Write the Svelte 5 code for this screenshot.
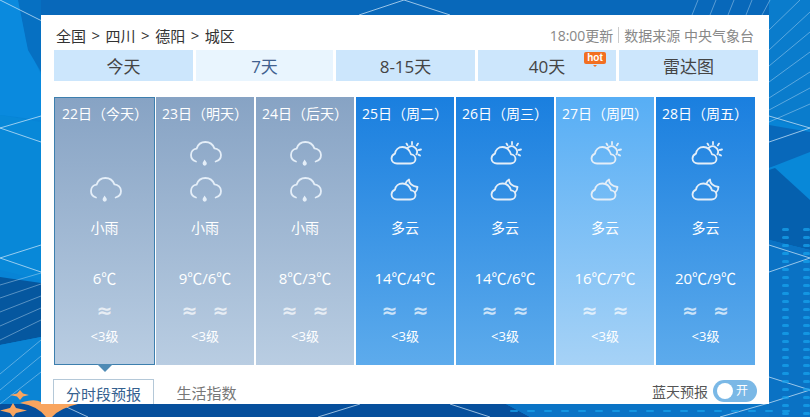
<script>
  const days = [
    { date: "22日（今天）", icons: ["rain"], weather: "小雨", temp: "6℃", winds: 1, level: "<3级", kind: "past", today: true },
    { date: "23日（明天）", icons: ["rain", "rain"], weather: "小雨", temp: "9℃/6℃", winds: 2, level: "<3级", kind: "past" },
    { date: "24日（后天）", icons: ["rain", "rain"], weather: "小雨", temp: "8℃/3℃", winds: 2, level: "<3级", kind: "past" },
    { date: "25日（周二）", icons: ["sun", "moon"], weather: "多云", temp: "14℃/4℃", winds: 2, level: "<3级", kind: "" },
    { date: "26日（周三）", icons: ["sun", "moon"], weather: "多云", temp: "14℃/6℃", winds: 2, level: "<3级", kind: "" },
    { date: "27日（周四）", icons: ["sun", "moon"], weather: "多云", temp: "16℃/7℃", winds: 2, level: "<3级", kind: "light" },
    { date: "28日（周五）", icons: ["sun", "moon"], weather: "多云", temp: "20℃/9℃", winds: 2, level: "<3级", kind: "" }
  ];
  const tabs = ["今天", "7天", "8-15天", "40天", "雷达图"];
  const rows = Array.from({ length: 24 }, (_, i) => 228 + i * 8);
  const dashes = Array.from({ length: 17 }, (_, i) => 510 + i * 17);
</script>

<div class="page">
  <svg class="bg" viewBox="0 0 810 417" width="810" height="417" aria-hidden="true">
    <rect width="810" height="417" fill="#0884d6" />
    <polygon points="0,0 810,0 810,15 0,15" fill="#0868ba" />
    <polygon points="0,0 20,0 26,40 41,75 41,120 0,115" fill="#0a8ade" />
    <polygon points="18,0 41,0 41,72 28,50" fill="#0670c2" />
    <polygon points="0,115 41,122 41,280 0,270" fill="#0888d8" />
    <polygon points="0,277 41,283 41,337 0,345" fill="#05579f" />
    <polygon points="0,345 41,337 41,417 0,417" fill="#0a84d4" />
    <polygon points="0,404 506,404 530,417 0,417" fill="#064f9c" />
    <polygon points="506,404 810,404 810,417 530,417" fill="#0a74c6" />
    <polygon points="769,0 810,0 810,130 769,118" fill="#0a7ccc" />
    <polygon points="769,125 810,132 810,155 769,168" fill="#0868ba" />
    <polygon points="769,168 810,152 810,200 775,168" fill="#0888d8" />
    <polygon points="769,170 775,168 810,200 810,250 769,240" fill="#0560ae" />
    <polygon points="769,240 810,250 810,417 769,417" fill="#0a72c4" />
    <g stroke="#d5ebfb" stroke-width="1" fill="none" opacity="0.7">
      <path d="M0 0 L44 22 M0 128 L41 116 M0 128 L41 142 M0 258 L41 245 M0 258 L41 272" />
      <path d="M810 128 L769 116 M810 128 L769 142 M810 258 L769 245 M810 258 L769 272 M810 390 L769 377 M810 390 L769 403" />
      <path d="M359 15 L404 0 L450 15" />
      <path d="M318 417 L360 404 M450 404 L490 417 M720 417 L769 403" />
      <path d="M60 404 L88 417" />
    </g>
    <g stroke="#d5ebfb" stroke-width="0.8" fill="none" opacity="0.5">
      <path d="M0 285 L41 273 M0 298 L41 284 M0 312 L41 296 M0 326 L41 308 M0 340 L41 320 M0 374 L41 340 M0 390 L41 356 M0 404 L41 372" />
      <path d="M769 30 L800 0 M769 50 L810 12 M769 66 L810 32 M769 82 L810 52 M769 98 L810 72 M769 110 L810 88 M769 122 L810 104" />
      <path d="M692 15 L698 0 M710 15 L716 0 M728 15 L734 0 M746 15 L752 0 M762 15 L770 0" />
    </g>
    <g fill="#17a2ec" opacity="0.75">
      {#each rows as y}
        <rect x="782" {y} width="7" height="3" rx="1.5" />
        <rect x="803" {y} width="7" height="3" rx="1.5" />
      {/each}
      {#each dashes as x}
        <rect {x} y="410" width="8" height="2" rx="1" />
      {/each}
    </g>
    <g fill="#f9a55f">
      <path d="M20 390 L23 393.5 L29 395 L23 396.5 L20 400 L17 396.5 L10 395 L17 393.5Z" />
      <path d="M13 403 L16 408 L27 410.5 L16 413 L13 417 L10 413 L0 410.5 L10 408Z" />
      <path d="M20 403 Q34 398 41 402 Q62 402 78 404 Q60 408 52 417 L46 417 Q38 406 20 403Z" />
    </g>
  </svg>

  <main class="panel">
    <header class="top">
      <nav class="crumbs">
        <span>全国</span><i>&gt;</i><span>四川</span><i>&gt;</i><span>德阳</span><i>&gt;</i><span>城区</span>
      </nav>
      <div class="meta">18:00更新<b></b>数据来源 中央气象台</div>
    </header>

    <div class="tabs">
      {#each tabs as tab, i}
        <div class="tab" class:active={i === 1}>
          {tab}
          {#if tab === "40天"}<em class="hot">hot</em>{/if}
        </div>
      {/each}
    </div>

    <div class="cards">
      {#each days as day}
        <div class="card {day.kind}" class:today={day.today}>
          <div class="date">{day.date}</div>
          <div class="icons" class:single={day.icons.length === 1}>
            {#each day.icons as icon}
              <svg class="ico" viewBox="0 0 32 26" width="32" height="26" fill="none" stroke="currentColor" stroke-width="1.8" stroke-linecap="round" stroke-linejoin="round">
                {#if icon === "rain"}
                  <path d="M6 20.5C2.8 19.5 1 17 1 14C1 10.6 3.4 8 6.6 7.6C8 3.4 11.4 1 15.4 1C19.6 1 23 3.6 24.4 7.4C28 7.6 31 10.4 31 14C31 17 29 19.6 25.6 20.5" />
                  <path d="M14.6 18.6C13.6 20.4 12.6 21.4 12.6 22.6A2.1 2.1 0 0 0 16.8 22.6C16.8 21.4 15.6 20.4 14.6 18.6Z" fill="currentColor" stroke="none" />
                {:else if icon === "sun"}
                  <path d="M7 22.5H20.5C23.5 22.5 25.5 20.5 25.5 18C25.5 15.5 23.5 13.5 21 13.3C19.5 8.8 16.5 6 12.5 6C8.5 6 5.5 8.8 5 12.6C2.8 13.6 1.5 15.4 1.5 17.6C1.5 20.4 4 22.5 7 22.5Z" />
                  <path d="M17.6 7A5.5 5.5 0 0 1 26.4 13.4" />
                  <path d="M22 1V3.2M16.5 2.6L17.5 4.2M28 2.6L26.8 4.4M31 8.5L28.8 9M30 14.5L28.4 13.6" />
                {:else}
                  <path d="M7 22.5H20.5C23.5 22.5 25.5 20.5 25.5 18C25.5 15.5 23.5 13.5 21 13.3C19.5 8.8 16.5 6.5 12.5 6.5C8.5 6.5 5.5 9 5 12.6C2.8 13.6 1.5 15.4 1.5 17.6C1.5 20.4 4 22.5 7 22.5Z" />
                  <path d="M15.5 6.5C16 5 17.2 3.5 19 2.5C19 6 22 9 27.5 10C27.5 12 26.6 14 25 15.5" />
                {/if}
              </svg>
            {/each}
          </div>
          <div class="weather">{day.weather}</div>
          <div class="temp">{day.temp}</div>
          <div class="wind">
            {#each Array(day.winds) as _}<span>≈</span>{/each}
          </div>
          <div class="level">{day.level}</div>
        </div>
      {/each}
    </div>

    <footer class="bottom">
      <div class="subtabs">
        <div class="subtab on">分时段预报</div>
        <div class="subtab">生活指数</div>
      </div>
      <div class="blue">
        蓝天预报
        <span class="switch"><span class="knob"></span>开</span>
      </div>
    </footer>
  </main>
</div>

<style>
  :global(body) {
    margin: 0;
  }
  .page {
    position: relative;
    width: 810px;
    height: 417px;
    overflow: hidden;
    box-sizing: border-box;
    padding: 15px 41px 13px;
    font-family: "Open Sans", "Noto Sans CJK SC", sans-serif;
  }
  .bg {
    position: absolute;
    left: 0;
    top: 0;
  }
  .panel {
    position: relative;
    height: 389px;
    overflow: hidden;
    background: #fff;
    padding: 0 13px;
    box-sizing: border-box;
  }
  .top {
    display: flex;
    justify-content: space-between;
    align-items: center;
    height: 35px;
    padding: 5px 2px 0;
    box-sizing: border-box;
  }
  .crumbs {
    display: flex;
    align-items: center;
    gap: 5.5px;
    font-size: 15px;
    color: #333;
  }
  .crumbs i {
    font-style: normal;
  }
  .meta {
    display: flex;
    align-items: center;
    font-size: 14px;
    color: #888;
  }
  .meta b {
    width: 1px;
    height: 16px;
    margin: 0 5px;
    background: #ccc;
  }
  .tabs {
    display: grid;
    grid-template-columns: 139px 137px 139px 138px 139px;
    gap: 3px;
    height: 31px;
  }
  .tab {
    position: relative;
    display: flex;
    align-items: center;
    justify-content: center;
    background: #cce6fc;
    color: #444;
    font-size: 17px;
  }
  .tab.active {
    background: #e9f5fe;
    color: #41618f;
  }
  .hot {
    position: absolute;
    right: 10px;
    top: 2px;
    width: 22px;
    height: 12px;
    border-radius: 2px;
    background: #f26f21;
    color: #fff;
    text-align: center;
    font: 700 10px/11px "Liberation Sans", sans-serif;
  }
  .hot::after {
    content: "";
    position: absolute;
    left: 9px;
    bottom: -3px;
    border: 2px solid transparent;
    border-top-color: #f26f21;
    border-bottom: 0;
  }
  .cards {
    display: grid;
    grid-template-columns: 100px 98px 98px 98px 98px 98px 99px;
    column-gap: 2px;
    height: 268px;
    margin-top: 16px;
  }
  .card {
    position: relative;
    display: flex;
    flex-direction: column;
    box-sizing: border-box;
    padding: 7px 0 0;
    color: #fff;
    text-align: center;
    background: linear-gradient(#1a7fdf, #5dabec);
  }
  .card.past {
    background: linear-gradient(#87a3c4, #b9cde2);
  }
  .card.light {
    background: linear-gradient(#57aef5, #a6d2f6);
  }
  .card.today {
    border: 1px solid #3d7fae;
    margin-right: -1px;
    padding-top: 6px;
  }
  .card.today::after {
    content: "";
    position: absolute;
    left: 50%;
    bottom: -8px;
    margin-left: -8px;
    border: 8px solid transparent;
    border-top-color: #4f8bb5;
    border-bottom: 0;
  }
  .date {
    font-size: 14px;
    line-height: 20px;
    text-align: left;
    padding-left: 6px;
    white-space: nowrap;
  }
  .card.today .date {
    padding-left: 7px;
  }
  .icons {
    display: flex;
    flex-direction: column;
    align-items: center;
    gap: 10px;
    height: 62px;
    margin-top: 17px;
    padding-left: 2px;
  }
  .icons.single {
    justify-content: flex-end;
  }
  .ico {
    color: #e4eef8;
  }
  .weather {
    margin-top: 15px;
    font-size: 14px;
    line-height: 20px;
  }
  .temp {
    margin-top: 30px;
    font-size: 15px;
    line-height: 20px;
  }
  .wind {
    display: flex;
    justify-content: center;
    gap: 15px;
    margin-top: 12px;
    font-family: "DejaVu Sans", sans-serif;
    font-size: 19px;
    font-weight: 700;
    line-height: 20px;
    opacity: 0.7;
  }
  .level {
    margin-top: 6px;
    font-size: 13px;
    line-height: 20px;
  }
  .bottom {
    display: flex;
    justify-content: space-between;
    align-items: flex-start;
    margin-top: 14px;
  }
  .subtabs {
    display: flex;
    margin-left: -1px;
  }
  .subtab {
    width: 101px;
    height: 30px;
    box-sizing: border-box;
    text-align: center;
    font-size: 15px;
    line-height: 28px;
    color: #777;
    margin-right: 2px;
  }
  .subtab.on {
    border: 1px solid #b4c8d8;
    color: #34608f;
  }
  .blue {
    display: flex;
    align-items: center;
    gap: 5px;
    font-size: 14px;
    color: #555;
    margin: 1px -1px 0 0;
  }
  .switch {
    position: relative;
    width: 44px;
    height: 22px;
    box-sizing: border-box;
    padding-left: 23px;
    border-radius: 11px;
    background: #7ab8e6;
    color: #fff;
    font-size: 12px;
    line-height: 22px;
  }
  .knob {
    position: absolute;
    left: 4px;
    top: 3px;
    width: 16px;
    height: 16px;
    border-radius: 50%;
    background: #fff;
  }
</style>
